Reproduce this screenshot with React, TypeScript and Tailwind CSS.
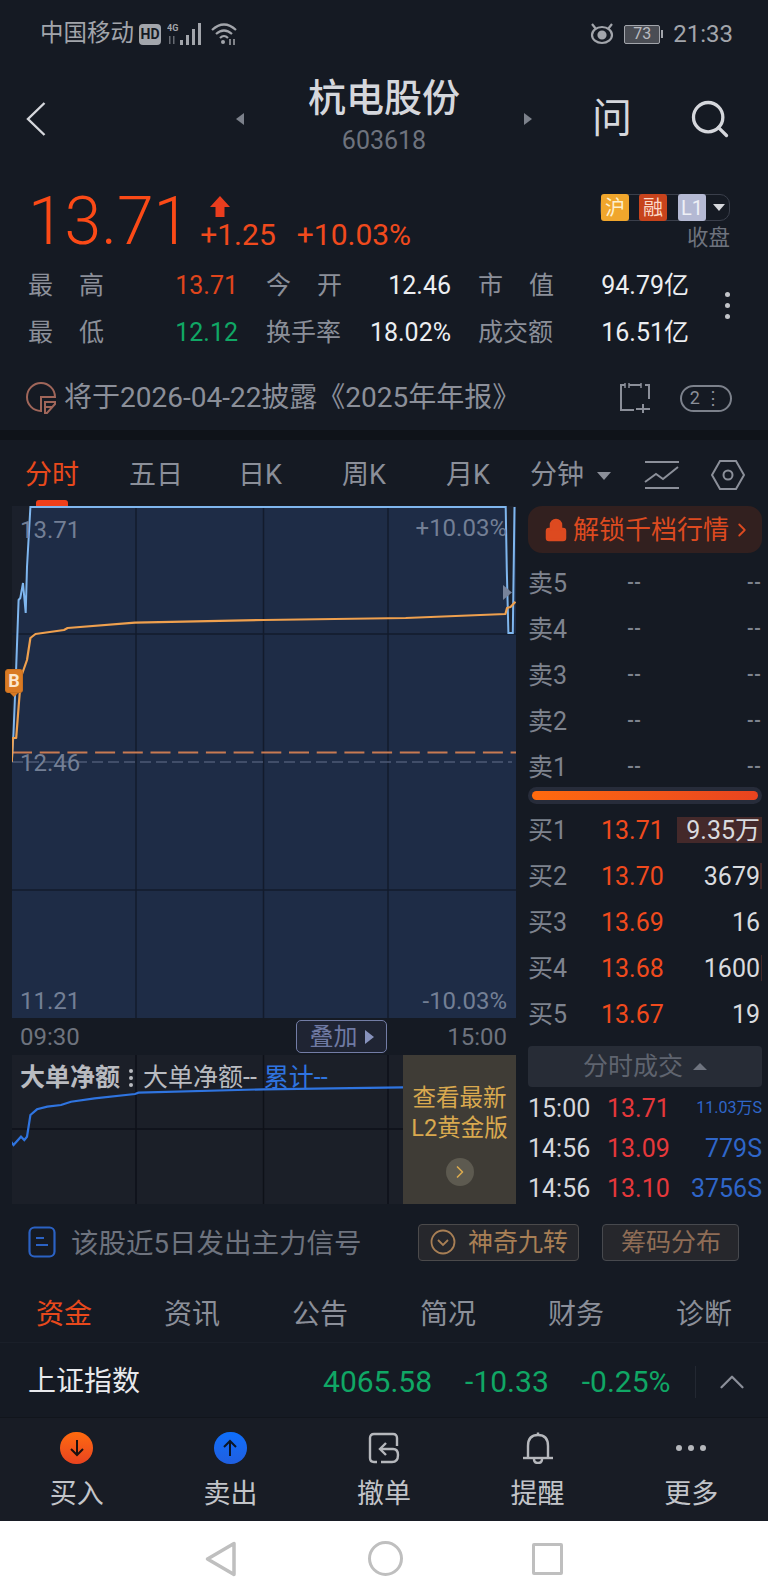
import React from 'react';
import { ChevronRight, ChevronUp, Lock, Search } from 'lucide-react';

const sellRows = ['卖5', '卖4', '卖3', '卖2', '卖1'];

const buyRows = [
  { label: '买1', price: '13.71', vol: '9.35万', bar: 'w-[85px]' },
  { label: '买2', price: '13.70', vol: '3679', bar: 'w-[2px]' },
  { label: '买3', price: '13.69', vol: '16', bar: 'w-0' },
  { label: '买4', price: '13.68', vol: '1600', bar: 'w-[1px]' },
  { label: '买5', price: '13.67', vol: '19', bar: 'w-0' },
];

const trades = [
  { time: '15:00', price: '13.71', vol: '11.03万S', small: true },
  { time: '14:56', price: '13.09', vol: '779S', small: false },
  { time: '14:56', price: '13.10', vol: '3756S', small: false },
];

const StatRow = ({ a, aVal, aColor, b, bVal, c, cVal }: { a: string[]; aVal: string; aColor: string; b: string[]; bVal: string; c: string[]; cVal: string }) => (
  <div className="flex h-[47px] items-center text-[25px] leading-none">
    <div className="flex w-[76px] justify-between text-[#8b8f99]">{a.map((t) => <span key={t}>{t}</span>)}</div>
    <div className={`w-[134px] text-right ${aColor}`}>{aVal}</div>
    <div className="ml-[28px] flex w-[76px] justify-between text-[#8b8f99]">{b.map((t) => <span key={t}>{t}</span>)}</div>
    <div className="w-[109px] text-right text-[#eceef1]">{bVal}</div>
    <div className="ml-[27px] flex w-[76px] justify-between text-[#8b8f99]">{c.map((t) => <span key={t}>{t}</span>)}</div>
    <div className="w-[135px] text-right text-[#eceef1]">{cVal}</div>
  </div>
);

const StatusBar = () => (
  <div className="flex h-[68px] items-center pl-[40px] pr-[35px] text-[#a2a5ab]">
    <span className="text-[23.500px] leading-none">中国移动</span>
    <span className="ml-[5px] flex h-[21px] w-[22px] items-center justify-center rounded-[4px] bg-[#a2a5ab] text-[14px] font-bold leading-none text-[#151a23]">HD</span>
    <svg width="38" height="24" viewBox="0 0 38 24" className="ml-[6px]" fill="#a2a5ab">
      <text x="0" y="9" fontSize="9" fontWeight="700">4G</text>
      <rect x="2" y="14" width="1.500" height="8" fill="#666a72" />
      <rect x="6" y="14" width="1.500" height="8" fill="#666a72" />
      <rect x="13" y="18" width="3" height="5" />
      <rect x="19" y="13" width="3" height="10" />
      <rect x="25" y="7" width="3" height="16" />
      <rect x="31" y="1" width="3" height="22" />
    </svg>
    <svg width="28" height="24" viewBox="0 0 28 24" className="ml-[6px]" fill="none" stroke="#a2a5ab" strokeWidth="2.200">
      <path d="M1 8 Q13 -3 25 8" />
      <path d="M5 12 Q13 5 21 12" />
      <path d="M9 16 Q13 12 17 16" />
      <circle cx="12" cy="20" r="2" fill="#a2a5ab" stroke="none" />
      <path d="M19 17v6M23 17v6" strokeWidth="1.500" />
    </svg>
    <svg width="26" height="24" viewBox="0 0 26 24" className="ml-auto" fill="none" stroke="#a2a5ab" strokeWidth="2.200">
      <path d="M3 2 L7 7M23 2 L19 7" />
      <ellipse cx="13" cy="13" rx="10" ry="8" />
      <circle cx="13" cy="13" r="3.500" fill="#a2a5ab" />
    </svg>
    <div className="ml-[9px] flex h-[19px] w-[36px] items-center justify-center rounded-[2px] border border-[#a2a5ab] bg-[#4a4d54] text-[16px] leading-none text-[#b9bbc0]">73</div>
    <div className="ml-[1px] h-[8px] w-[2px] bg-[#a2a5ab]" />
    <span className="ml-[10px] text-[24px] leading-none">21:33</span>
  </div>
);

const Header = () => (
  <div className="flex h-[102px] items-center text-[#d5d7dc]">
    <div className="w-[236px] pl-[26px]">
      <svg width="20" height="34" viewBox="0 0 20 34" fill="none" stroke="#d5d7dc" strokeWidth="2.400">
        <path d="M18.500 1 L2 17 L18.500 33" />
      </svg>
    </div>
    <div className="h-0 w-0 border-y-[6px] border-r-[8px] border-y-transparent border-r-[#7c818b]" />
    <div className="flex w-[280px] flex-col items-center">
      <div className="text-[38px] font-medium leading-[44px]">杭电股份</div>
      <div className="text-[25px] leading-[42px] text-[#6e737e]">603618</div>
    </div>
    <div className="h-0 w-0 border-y-[6px] border-l-[8px] border-y-transparent border-l-[#7c818b]" />
    <div className="ml-[60px] w-[40px] text-center text-[40px] leading-none">问</div>
    <div className="ml-[56px]">
      <Search size={44} strokeWidth={1.800} />
    </div>
  </div>
);

const PriceRow = () => (
  <div className="flex h-[88px] items-start pl-[28px] pt-[22px]">
    <div className="text-[66px] font-light leading-[60px] text-[#fb4a17]">13.71</div>
    <div className="ml-[10px] flex flex-col">
      <svg width="20" height="21" viewBox="0 0 20 21" className="ml-[10px] mt-[4px]">
        <path d="M10 0 L20 11 H14.500 V21 H5.500 V11 H0 Z" fill="#ea3d1e" />
      </svg>
      <div className="flex text-[30px] leading-[36px] text-[#f04a1d]">
        <span>+1.25</span>
        <span className="ml-[21px]">+10.03%</span>
      </div>
    </div>
    <div className="ml-auto mr-[38px] mt-[2px] flex flex-col items-end">
      <div className="flex h-[27px] w-[130px] items-center rounded-[10px] border border-[#3a3f4b] text-[20px] leading-none">
        <span className="flex h-[27px] w-[28px] items-center justify-center rounded-[3px] bg-[#f0a62c] text-[#fdf0cf]">沪</span>
        <span className="ml-[10px] flex h-[27px] w-[28px] items-center justify-center rounded-[3px] bg-[#c7431c] text-[#fbd9c9]">融</span>
        <span className="ml-[11px] flex h-[27px] w-[28px] items-center justify-center rounded-[3px] bg-[#b4b9d3] text-[#eef0f6]">L1</span>
        <div className="ml-[7px] h-0 w-0 border-x-[6px] border-t-[7px] border-x-transparent border-t-[#d5d7dc]" />
      </div>
      <div className="mt-[3px] text-[21.500px] leading-[28px] text-[#6e737e]">收盘</div>
    </div>
  </div>
);

const Notice = () => (
  <div className="flex h-[74px] items-center pl-[24px] pt-[10px] text-[#8b8f99]">
    <svg width="34" height="32" viewBox="0 0 34 32" fill="none" stroke="#a0665a" strokeWidth="2">
      <path d="M17 29 A14 14 0 1 1 31 15 H17 Z" />
      <path d="M21 20 H31 L31 22 L23 31 H21 Z" />
      <path d="M21 25 H29" />
    </svg>
    <span className="ml-[6px] text-[28px] leading-none">将于2026-04-22披露《2025年年报》</span>
    <svg width="34" height="32" viewBox="0 0 34 32" className="ml-auto" fill="none" stroke="#8b8f99" strokeWidth="2">
      <path d="M16 28 H3 V3 H7 M11 3 H23 M27 3 H31 V17" />
      <path d="M7 1 V6 M23 1 V6 M11 1 V6" strokeWidth="1.500" />
      <path d="M25 22 V31 M18 27 H32" />
    </svg>
    <div className="ml-[28px] mr-[36px] flex h-[27px] w-[52px] items-center justify-center rounded-full border-2 border-[#7c818b] text-[18px] leading-none">2 ⋮</div>
  </div>
);

const ChartTabs = () => (
  <div className="flex h-[66px] items-center pt-[4px] text-[27px] leading-none text-[#8b8f99]">
    <div className="relative w-[104px] text-center text-[#e8491c]">
      分时
      <div className="absolute left-[36px] top-[38px] h-[6px] w-[32px] rounded-t-[3px] bg-[#ee3f1a]" />
    </div>
    <div className="w-[104px] text-center">五日</div>
    <div className="w-[104px] text-center">日K</div>
    <div className="w-[104px] text-center">周K</div>
    <div className="w-[104px] text-center">月K</div>
    <div className="ml-[10px]">分钟</div>
    <div className="ml-[13px] mt-[2px] h-0 w-0 border-x-[7px] border-t-[8px] border-x-transparent border-t-[#8b8f99]" />
    <svg width="36" height="28" viewBox="0 0 36 28" className="ml-[33px]" fill="none" stroke="#8b8f99" strokeWidth="2">
      <path d="M1 1 H35 M1 27 H35" />
      <path d="M1 21 L12 13 L19 18 L34 6" />
    </svg>
    <svg width="34" height="30" viewBox="0 0 34 30" className="ml-[31px]" fill="none" stroke="#8b8f99" strokeWidth="2">
      <path d="M9 1 H25 L33 15 L25 29 H9 L1 15 Z" />
      <circle cx="17" cy="15" r="4.500" />
    </svg>
  </div>
);

const PriceChart = () => (
  <div className="relative h-[512px] bg-[#1b202b]">
    <svg width="504" height="512" viewBox="12 506 504 512" className="block">
      <polygon fill="#1e2c46" points="12,1018 12,762 13.500,733 16.200,667 18.600,600 20.300,598 23,583 25.700,613 27,567 30.400,507 505.700,507 506.800,570 508.400,633 512.800,633 514.500,507 516,507 516,1018" />
      <g stroke="#131b2c" strokeWidth="1.500">
        <path d="M136 507V1018M263.500 507V1018M388 507V1018M12 634H516M12 890H516" />
      </g>
      <path d="M12 762H512" stroke="#4d5a75" strokeWidth="1.500" strokeDasharray="11 5" />
      <path d="M12 752.500H516" stroke="#c87a52" strokeWidth="1.800" strokeDasharray="20 7.700" />
      <polyline fill="none" stroke="#7fb6ee" strokeWidth="2" points="11.800,761.700 13.500,733 16.200,667 18.600,600 20.300,598 23,583 25.700,613 27,567 30.400,507 505.700,507 506.800,570 508.400,633 512.800,633 514.500,507" />
      <polyline fill="none" stroke="#efa04e" strokeWidth="2.200" strokeLinejoin="round" points="11.800,761.700 12.800,738 16.200,738 18.600,707 21,677 27,660 30.400,638 35.500,634 64,630 67.600,628 135,622.700 263.700,620 405.700,618 505.400,614 507,608 510.500,607 515.500,601.700" />
      <path d="M503 585 L512 592.500 L503 600 Z" fill="#77839b" />
    </svg>
    <span className="absolute left-[8px] top-[12px] text-[24px] leading-none text-[#737f95]">13.71</span>
    <span className="absolute right-[9px] top-[10px] text-[24px] leading-none text-[#737f95]">+10.03%</span>
    <span className="absolute left-[8px] top-[245px] text-[24px] leading-none text-[#737f95]">12.46</span>
    <span className="absolute bottom-[5px] left-[8px] text-[24px] leading-none text-[#737f95]">11.21</span>
    <span className="absolute bottom-[5px] right-[9px] text-[24px] leading-none text-[#737f95]">-10.03%</span>
    <div className="absolute left-[-7px] top-[163px] flex h-[24px] w-[18px] items-center justify-center rounded-[3px] border border-[#c9701f] bg-[#d97a24] text-[18px] font-bold leading-none text-[#fbe7cf]">B</div>
    <div className="absolute left-[-2px] top-[187px] h-0 w-0 border-x-[4px] border-t-[4px] border-x-transparent border-t-[#d97a24]" />
  </div>
);

const AxisRow = () => (
  <div className="flex h-[37px] items-center pl-[8px] pr-[9px] text-[24px] leading-none text-[#6e737e]">
    <span className="w-[276px]">09:30</span>
    <div className="flex h-[33px] w-[91px] items-center justify-center rounded-[5px] border border-[#737da6] bg-[#1f2433] text-[24px] text-[#6f7aa3]">
      叠加
      <div className="ml-[7px] h-0 w-0 border-y-[7px] border-l-[9px] border-y-transparent border-l-[#8792bd]" />
    </div>
    <span className="ml-auto">15:00</span>
  </div>
);

const SubChart = () => (
  <div className="relative flex h-[149px] bg-[#1b1f28]">
    <div className="relative w-[391px]">
      <svg width="391" height="149" viewBox="12 1055 391 149" className="block">
        <path d="M136 1055V1204M263.500 1055V1204M388 1055V1204M12 1129H403" stroke="#0e1118" strokeWidth="1.500" />
        <polyline fill="none" stroke="#2f74e0" strokeWidth="2.200" points="11,1141.700 13.500,1145 21,1136.700 24.300,1140 27,1136.700 30.400,1115 37,1109.300 47.300,1106.700 61,1105 71,1101.700 94.600,1098.300 135,1094 138.500,1092.700 263.500,1089.300 403,1087.300" />
      </svg>
      <div className="absolute left-[8px] top-[10px] flex items-center text-[25px] leading-none text-[#b9bbc0]">
        <span className="font-bold">大单净额</span>
        <div className="ml-[9px] flex flex-col gap-[3px]">
          <div className="h-[4px] w-[4px] rounded-full bg-[#b9bbc0]" />
          <div className="h-[4px] w-[4px] rounded-full bg-[#b9bbc0]" />
          <div className="h-[4px] w-[4px] rounded-full bg-[#b9bbc0]" />
        </div>
        <span className="ml-[10px]">大单净额--</span>
        <span className="ml-[7px] text-[#2f74e0]">累计--</span>
      </div>
    </div>
    <div className="flex w-[113px] flex-col items-center bg-[#3f3c36] pt-[28px] text-[23.500px] leading-[30px] text-[#d9a94f]">
      <span>查看最新</span>
      <span>L2黄金版</span>
      <div className="mt-[15px] flex h-[28px] w-[28px] items-center justify-center rounded-full bg-[#5d5a50]">
        <ChevronRight size={20} color="#d9a94f" />
      </div>
    </div>
  </div>
);

const QuotePanel = () => (
  <div className="flex w-[234px] flex-col text-[25px] leading-none">
    <div className="flex h-[47px] items-center rounded-[14px] bg-[#32201f] pl-[16px] text-[26px] text-[#dd4a20]">
      <Lock size={24} fill="#dd4a20" strokeWidth={2.500} />
      <span className="ml-[5px]">解锁千档行情</span>
      <ChevronRight size={22} className="ml-[2px]" />
    </div>
    <div className="mt-[10px] flex flex-col gap-[6px]">
      {sellRows.map((label) => (
        <div key={label} className="flex h-[40px] items-center text-[#7e838e]">
          <span className="w-[99px]">{label}</span>
          <span className="text-[18px] font-bold">--</span>
          <span className="ml-auto pr-[1px] text-[18px] font-bold">--</span>
        </div>
      ))}
    </div>
    <div className="flex h-[17px] items-center rounded-full bg-[#272c3a] px-[4px]">
      <div className="h-[9px] w-full rounded-full bg-gradient-to-r from-[#ff6a0d] to-[#e8431f]" />
    </div>
    <div className="mt-[6px] flex flex-col gap-[6px]">
      {buyRows.map((row) => (
        <div key={row.label} className="relative flex h-[40px] items-center">
          <div className={`absolute right-0 top-[7px] h-[26px] bg-[#44292a] ${row.bar}`} />
          <span className="w-[73px] text-[#7e838e]">{row.label}</span>
          <span className="text-[#f04a1d]">{row.price}</span>
          <span className="relative ml-auto pr-[2px] text-[#d9dbdf]">{row.vol}</span>
        </div>
      ))}
    </div>
    <div className="mt-[12px] flex h-[41px] items-center justify-center rounded-[4px] bg-[#272c36] text-[#5f646f]">
      分时成交
      <div className="ml-[10px] h-0 w-0 border-x-[7px] border-b-[7px] border-x-transparent border-b-[#6f747f]" />
    </div>
    <div className="mt-[5px] flex flex-col gap-[8px]">
      {trades.map((t, i) => (
        <div key={i} className="flex h-[32px] items-center">
          <span className="w-[79px] text-[#d5d7dc]">{t.time}</span>
          <span className="text-[#e5383b]">{t.price}</span>
          <span className={`ml-auto text-[#2f66c9] ${t.small ? 'text-[16px]' : ''}`}>{t.vol}</span>
        </div>
      ))}
    </div>
  </div>
);

const SignalRow = () => (
  <div className="flex h-[76px] items-center pl-[28px] text-[#6e737e]">
    <svg width="28" height="32" viewBox="0 0 28 32" fill="none" stroke="#2b62c4" strokeWidth="2.200">
      <rect x="1.500" y="1.500" width="25" height="29" rx="5" />
      <path d="M8 12 H16 M8 19 H20" />
    </svg>
    <span className="ml-[15px] mt-[3px] text-[27.500px] leading-none">该股近5日发出主力信号</span>
    <div className="ml-[57px] flex h-[37px] w-[161px] items-center justify-center rounded-[4px] border border-[#4b4a4b] bg-[#26272c] text-[25px] leading-none text-[#a87f55]">
      <svg width="26" height="26" viewBox="0 0 26 26" fill="none" stroke="#a87f55" strokeWidth="1.800" className="mr-[12px]">
        <circle cx="13" cy="13" r="11.500" />
        <path d="M8 11 L13 16 L18 11" />
      </svg>
      神奇九转
    </div>
    <div className="ml-[23px] flex h-[37px] w-[137px] items-center justify-center rounded-[4px] border border-[#47494e] bg-[#26272c] text-[25px] leading-none text-[#8f6d56]">筹码分布</div>
  </div>
);

const InfoTabs = () => (
  <div className="flex h-[62px] items-center pt-[8px] text-[28px] leading-none text-[#8b8f99]">
    {['资金', '资讯', '公告', '简况', '财务', '诊断'].map((t, i) => (
      <div key={t} className={`w-[128px] text-center ${i === 0 ? 'text-[#e8491c]' : ''}`}>{t}</div>
    ))}
  </div>
);

const IndexRow = () => (
  <div className="flex h-[75px] items-center border-t border-[#1a1f29] pl-[28px] pt-[3px] text-[30px] leading-none">
    <span className="text-[28px] text-[#e8e9ec]">上证指数</span>
    <span className="ml-[183px] text-[#10a765]">4065.58</span>
    <span className="ml-[33px] text-[#10a765]">-10.33</span>
    <span className="ml-[33px] text-[#10a765]">-0.25%</span>
    <div className="ml-[24px] h-[32px] w-px bg-[#232832]" />
    <ChevronUp size={42} strokeWidth={1.300} className="ml-[15px] text-[#8b8f99]" />
  </div>
);

const BottomBar = () => (
  <div className="grid h-[104px] grid-cols-5 border-t border-[#11151c] bg-[#181c25] text-[27px] leading-none text-[#c2c4c9]">
    <div className="flex flex-col items-center pt-[14px]">
      <div className="flex h-[32px] w-[33px] items-center justify-center rounded-full bg-gradient-to-b from-[#ff6a0d] to-[#e8431f]">
        <svg width="16" height="18" viewBox="0 0 16 18" fill="none" stroke="#1a1010" strokeWidth="2"><path d="M8 1V16M2 10L8 16L14 10" /></svg>
      </div>
      <span className="mt-[17px]">买入</span>
    </div>
    <div className="flex flex-col items-center pt-[14px]">
      <div className="flex h-[32px] w-[33px] items-center justify-center rounded-full bg-gradient-to-b from-[#0d6ffb] to-[#1f5fe0]">
        <svg width="16" height="18" viewBox="0 0 16 18" fill="none" stroke="#0b1626" strokeWidth="2"><path d="M8 17V2M2 8L8 2L14 8" /></svg>
      </div>
      <span className="mt-[17px]">卖出</span>
    </div>
    <div className="flex flex-col items-center pt-[14px]">
      <svg width="32" height="32" viewBox="0 0 32 32" fill="none" stroke="#b5b7bc" strokeWidth="2.400">
        <path d="M29 14 V6 Q29 2 25 2 H6 Q2 2 2 6 V26 Q2 30 6 30 H9" />
        <path d="M18 11 L12 17 L18 23" />
        <path d="M12 17 H25 Q30 17 30 23 Q30 30 24 30 H13" />
      </svg>
      <span className="mt-[17px]">撤单</span>
    </div>
    <div className="flex flex-col items-center pt-[14px]">
      <svg width="32" height="32" viewBox="0 0 32 32" fill="none" stroke="#b5b7bc" strokeWidth="2.400">
        <path d="M16 0.500 V3" />
        <path d="M6 26 V14 Q6 3 16 3 Q26 3 26 14 V26" />
        <path d="M1 26 H31" />
        <path d="M12 27 Q12 31 16 31 Q20 31 20 27" />
      </svg>
      <span className="mt-[17px]">提醒</span>
    </div>
    <div className="flex flex-col items-center pt-[14px]">
      <div className="flex h-[32px] items-center gap-[6px]">
        <div className="h-[6px] w-[6px] rounded-full bg-[#b5b7bc]" />
        <div className="h-[6px] w-[6px] rounded-full bg-[#b5b7bc]" />
        <div className="h-[6px] w-[6px] rounded-full bg-[#b5b7bc]" />
      </div>
      <span className="mt-[17px]">更多</span>
    </div>
  </div>
);

const NavBar = () => (
  <div className="flex h-[75px] items-center justify-center bg-white">
    <svg width="32" height="36" viewBox="0 0 32 36" fill="none" stroke="#bfbfbf" strokeWidth="3.500" strokeLinejoin="round">
      <path d="M29 2.500 V33.500 L2.500 18 Z" />
    </svg>
    <div className="ml-[131px] h-[35px] w-[35px] rounded-full border-[3.500px] border-[#bfbfbf]" />
    <div className="ml-[129px] h-[32px] w-[31px] rounded-[2px] border-[3.500px] border-[#bfbfbf]" />
  </div>
);

export default function App() {
  return (
    <div className="flex h-[1596px] w-[768px] flex-col overflow-hidden bg-[#151a23] font-['Roboto','Noto_Sans_CJK_SC',sans-serif]">
      <StatusBar />
      <Header />
      <PriceRow />
      <div className="mt-[4px] flex items-center pl-[28px]">
        <div>
          <StatRow a={['最', '高']} aVal="13.71" aColor="text-[#e0451c]" b={['今', '开']} bVal="12.46" c={['市', '值']} cVal="94.79亿" />
          <StatRow a={['最', '低']} aVal="12.12" aColor="text-[#10a765]" b={['换手率']} bVal="18.02%" c={['成交额']} cVal="16.51亿" />
        </div>
        <div className="ml-[36px] mt-[-8px] flex flex-col gap-[6px]">
          <div className="h-[5px] w-[5px] rounded-full bg-[#c2c4c9]" />
          <div className="h-[5px] w-[5px] rounded-full bg-[#c2c4c9]" />
          <div className="h-[5px] w-[5px] rounded-full bg-[#c2c4c9]" />
        </div>
      </div>
      <Notice />
      <div className="h-[10px] bg-[#0f1319]" />
      <ChartTabs />
      <div className="flex h-[698px]">
        <div className="w-[528px] pl-[12px] pr-[12px]">
          <PriceChart />
          <AxisRow />
          <SubChart />
        </div>
        <QuotePanel />
      </div>
      <SignalRow />
      <InfoTabs />
      <IndexRow />
      <BottomBar />
      <NavBar />
    </div>
  );
}
